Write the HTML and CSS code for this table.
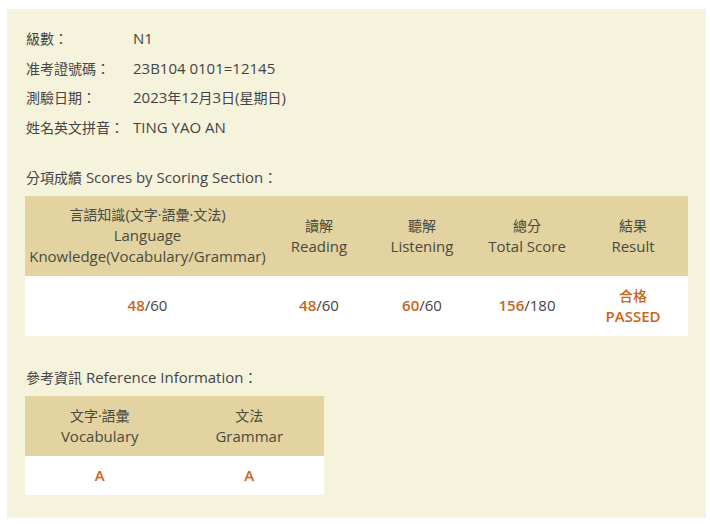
FILE: index.html
```html
<!DOCTYPE html>
<html lang="zh-Hant">
<head>
<meta charset="utf-8">
<link rel="stylesheet" href="styles.css">
</head>
<body>
<div class="panel">
  <dl class="info">
    <dt>級數：</dt><dd>N1</dd>
    <dt>准考證號碼：</dt><dd>23B104 0101=12145</dd>
    <dt>測驗日期：</dt><dd>2023<span class="zh">年</span>12<span class="zh">月</span>3<span class="zh">日</span>(<span class="zh">星期日</span>)</dd>
    <dt>姓名英文拼音：</dt><dd>TING YAO AN</dd>
  </dl>

  <h2 class="heading heading-scores"><span class="zh">分項成績</span> Scores by Scoring Section<span class="zh">：</span></h2>
  <table class="grid grid-scores">
    <colgroup>
      <col class="c1"><col class="c2"><col class="c3"><col class="c4"><col class="c5">
    </colgroup>
    <thead>
      <tr>
        <th><span class="zh">言語知識</span>(<span class="zh">文字·語彙·文法</span>)<br>Language<br>Knowledge(Vocabulary/Grammar)</th>
        <th><span class="zh">讀解</span><br>Reading</th>
        <th><span class="zh">聽解</span><br>Listening</th>
        <th><span class="zh">總分</span><br>Total Score</th>
        <th><span class="zh">結果</span><br>Result</th>
      </tr>
    </thead>
    <tbody>
      <tr>
        <td><span class="hl">48</span>/60</td>
        <td><span class="hl">48</span>/60</td>
        <td><span class="hl">60</span>/60</td>
        <td><span class="hl">156</span>/180</td>
        <td class="result"><span class="zh">合格</span><br>PASSED</td>
      </tr>
    </tbody>
  </table>

  <h2 class="heading heading-ref"><span class="zh">參考資訊</span> Reference Information<span class="zh">：</span></h2>
  <table class="grid grid-ref">
    <thead>
      <tr>
        <th><span class="zh">文字·語彙</span><br>Vocabulary</th>
        <th><span class="zh">文法</span><br>Grammar</th>
      </tr>
    </thead>
    <tbody>
      <tr>
        <td class="grade">A</td>
        <td class="grade">A</td>
      </tr>
    </tbody>
  </table>
</div>
</body>
</html>
```

FILE: styles.css
```css
html, body {
  margin: 0;
  padding: 0;
  background: #ffffff;
}

body {
  font-family: "Open Sans", "Noto Sans CJK TC", sans-serif;
  font-size: 15px;
  color: #444444;
}

.zh {
  font-size: 14px;
}

.panel {
  margin: 9px 4px 0 7px;
  height: 509px;
  box-sizing: border-box;
  background: #f6f3dd;
  padding: 15px 18px 0 18px;
}

.info {
  display: grid;
  grid-template-columns: 107px 1fr;
  margin: 0;
  padding-left: 1px;
  line-height: 29.7px;
}

.info dt,
.info dd {
  margin: 0;
}

.info dt {
  font-size: 14px;
}

.heading {
  font-size: 15px;
  font-weight: normal;
  margin: 0;
  padding-left: 1px;
  line-height: 24px;
}

.heading-scores {
  margin-top: 22px;
  margin-bottom: 6px;
}

.heading-ref {
  margin-top: 29px;
  margin-bottom: 6px;
}

.grid {
  border-collapse: collapse;
  table-layout: fixed;
  text-align: center;
}

.grid th {
  background: #e2d3a1;
  font-weight: normal;
  color: #4a4a40;
  line-height: 21px;
  padding: 0;
  vertical-align: middle;
}

.grid td {
  background: #ffffff;
  padding: 0;
  vertical-align: middle;
  line-height: 21px;
}

.grid-scores {
  width: 663px;
}

.grid-scores .c1 { width: 245px; }
.grid-scores .c2 { width: 98px; }
.grid-scores .c3 { width: 108px; }
.grid-scores .c4 { width: 102px; }
.grid-scores .c5 { width: 110px; }

.grid-scores th { height: 80px; }
.grid-scores td { height: 60px; }

.grid-ref {
  width: 299px;
}

.grid-ref th {
  width: 50%;
  height: 60px;
}

.grid-ref td {
  height: 39px;
}

.hl {
  color: #c8661a;
  font-weight: 600;
}

.result,
.grade {
  color: #c8661a;
  font-weight: 600;
}

.result .zh {
  font-weight: 500;
}
```
